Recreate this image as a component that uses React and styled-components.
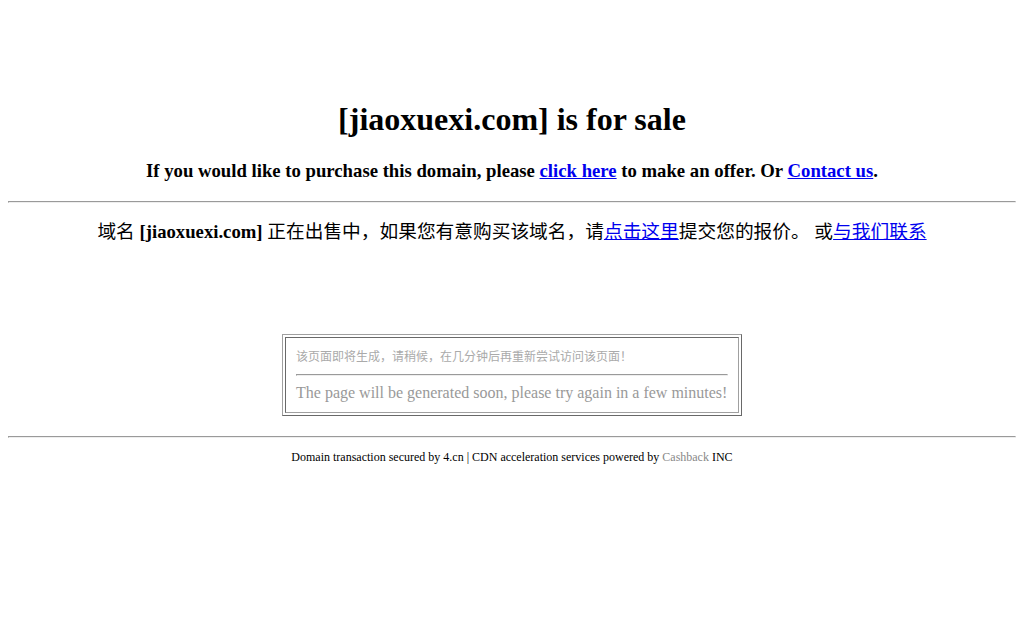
import React from "react";
import styled, { createGlobalStyle } from "styled-components";

const GlobalStyle = createGlobalStyle`
  body {
    margin: 8px;
    background: #fff;
    color: #000;
    font-family: "Liberation Serif", "Times New Roman", "Noto Sans CJK SC", serif;
  }
  a {
    color: #0000ee;
  }
`;

const Page = styled.div`
  padding-top: 72px;
  text-align: center;
`;

const Title = styled.h1`
  font-size: 32px;
  font-weight: bold;
  margin: 21.44px 0;
`;

const Offer = styled.h3`
  font-size: 18.72px;
  font-weight: bold;
  margin: 18.72px 0;
`;

const Rule = styled.hr`
  border-style: inset;
  border-width: 1px;
  color: gray;
  margin: ${(p) => (p.$top ? `${p.$top}px 0 8px` : "8px 0")};
  overflow: hidden;
`;

const Notice = styled.p`
  font-size: 18.72px;
  line-height: 21px;
  margin: 18px 0;
`;

const Spacer = styled.div`
  height: 74px;
`;

const NoticeTable = styled.table`
  margin: 0 auto;
  width: 460px;
  border: 1px solid;
  border-color: #a0a0a0 #696969 #696969 #a0a0a0;
  border-spacing: 2px;
`;

const NoticeCell = styled.td`
  border: 1px solid;
  border-color: #696969 #a0a0a0 #a0a0a0 #696969;
  padding: 12px 10px 10px;
  text-align: left;
  color: #999;
`;

const SmallNote = styled.div`
  font-size: 12px;
  line-height: 14px;
  color: #aaa;
`;

const InnerRule = styled(Rule)`
  margin: 10px 0 8px;
`;

const Soon = styled.div`
  font-size: 16px;
  line-height: 18px;
  white-space: nowrap;
`;

const Footer = styled.div`
  font-size: 12px;
  line-height: 14px;
  margin-top: 12px;
`;

const Muted = styled.span`
  color: #888;
`;

export default function App() {
  return (
    <>
      <GlobalStyle />
      <Page>
        <Title>[jiaoxuexi.com] is for sale</Title>
        <Offer>
          If you would like to purchase this domain, please <a href="#">click here</a> to make an offer. Or{" "}
          <a href="#">Contact us</a>.
        </Offer>
        <Rule />
        <Notice>
          域名 <b>[jiaoxuexi.com]</b> 正在出售中，如果您有意购买该域名，请<a href="#">点击这里</a>提交您的报价。 或
          <a href="#">与我们联系</a>
        </Notice>
        <Spacer />
        <NoticeTable>
          <tbody>
            <tr>
              <NoticeCell>
                <SmallNote>该页面即将生成，请稍候，在几分钟后再重新尝试访问该页面！</SmallNote>
                <InnerRule />
                <Soon>The page will be generated soon, please try again in a few minutes!</Soon>
              </NoticeCell>
            </tr>
          </tbody>
        </NoticeTable>
        <Rule $top={20} />
        <Footer>
          Domain transaction secured by 4.cn | CDN acceleration services powered by <Muted>Cashback</Muted> INC
        </Footer>
      </Page>
    </>
  );
}
